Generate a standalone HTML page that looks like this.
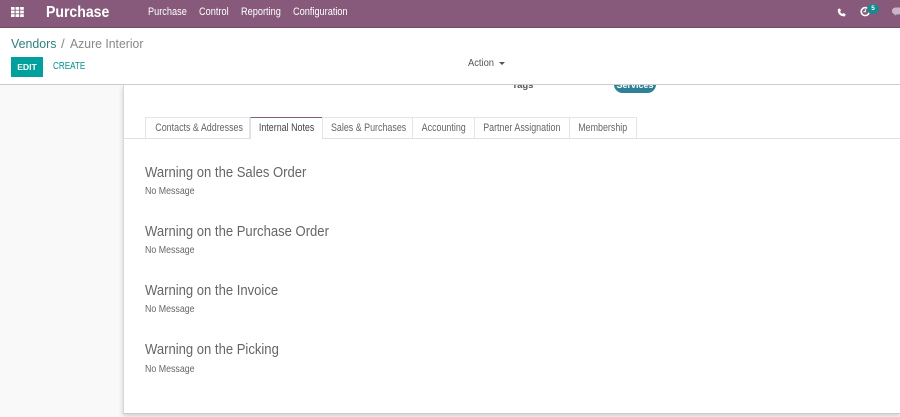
<!DOCTYPE html>
<html><head><meta charset="utf-8">
<style>
html,body{margin:0;padding:0;width:900px;height:417px;overflow:hidden;background:#f9f9f9;font-family:"Liberation Sans",sans-serif;color:#4c4c4c}
.a{position:absolute;white-space:nowrap;transform-origin:left center}
#nav{left:0;top:0;width:900px;height:27px;background:#875a7b;border-bottom:1px solid #6f4a66}
.m{top:5px;font-size:11px;line-height:14px;color:#fff;transform:scaleX(.835)}
#cp{left:0;top:28px;width:900px;height:56px;background:#fff;border-bottom:1px solid #ccc;z-index:3}
#sheet{left:123px;top:85px;width:777px;height:328px;background:#fff;border-left:1px solid #d8d8d8;border-bottom:1px solid #ccc;box-shadow:0 2px 5px rgba(0,0,0,.18)}
.tab{top:117px;height:20px;line-height:21px;background:#fff;border:1px solid #e2e5e8;border-bottom:none;font-size:10.8px;color:#666;text-align:center}
.tab span{display:inline-block;transform:scaleX(.825)}
.h{left:145px;font-size:14.6px;line-height:18px;color:#666;transform:scaleX(.895)}
.p{left:145px;font-size:10.4px;line-height:12px;color:#666;transform:scaleX(.85)}
</style></head><body>
<div id="nav" class="a"></div>
<svg class="a" style="left:11px;top:7px" width="13" height="10" viewBox="0 0 13 10" fill="#fff">
<rect x="0" y="0" width="3.6" height="2.8"/><rect x="4.6" y="0" width="3.6" height="2.8"/><rect x="9.2" y="0" width="3.6" height="2.8"/>
<rect x="0" y="3.6" width="3.6" height="2.8"/><rect x="4.6" y="3.6" width="3.6" height="2.8"/><rect x="9.2" y="3.6" width="3.6" height="2.8"/>
<rect x="0" y="7.2" width="3.6" height="2.8"/><rect x="4.6" y="7.2" width="3.6" height="2.8"/><rect x="9.2" y="7.2" width="3.6" height="2.8"/>
</svg>
<div class="a" style="left:46px;top:3px;font-size:15.8px;line-height:19px;font-weight:bold;color:#fff;transform:scaleX(.89)">Purchase</div>
<div class="a m" style="left:148px">Purchase</div>
<div class="a m" style="left:199px">Control</div>
<div class="a m" style="left:241px">Reporting</div>
<div class="a m" style="left:293px">Configuration</div>
<svg class="a" style="left:837px;top:7.5px" width="9" height="9" viewBox="0 0 9 9"><path d="M1 1 L3 .5 L4 2.8 L3 3.8 Q3.8 5.3 5.3 6 L6.3 5 L8.6 6.2 L8 8.2 Q4.5 8.8 2.2 6.3 Q.3 4 1 1Z" fill="#fff"/></svg>
<svg class="a" style="left:860px;top:6px" width="11" height="11" viewBox="0 0 11 11"><circle cx="5.2" cy="5.6" r="4" fill="none" stroke="#fff" stroke-width="1.6"/><path d="M5.4 3.2V5.8H3.4" fill="none" stroke="#fff" stroke-width="1"/></svg>
<div class="a" style="left:867px;top:4px;width:12px;height:10px;border-radius:5px;background:#178a8c;color:#fff;font-size:6.5px;line-height:10px;text-align:center;font-weight:bold">5</div>
<svg class="a" style="left:892px;top:7px" width="8" height="9" viewBox="0 0 8 9"><path d="M4 0.5C1.5.5 0 2 0 4s1.5 3.2 3 3.4L2.5 8.8 5 7.4H8V.5Z" fill="#c9b5c5"/></svg>

<div id="cp" class="a"></div>
<div class="a" style="left:11px;top:35px;font-size:13.3px;line-height:17px;z-index:4;color:#2f7f80;transform:scaleX(.93)">Vendors</div>
<div class="a" style="left:61px;top:35px;font-size:13.3px;line-height:17px;z-index:4;color:#888">/</div>
<div class="a" style="left:70px;top:35px;font-size:13.3px;line-height:17px;z-index:4;color:#888;transform:scaleX(.92)">Azure Interior</div>
<div class="a" style="left:11px;top:57px;width:32px;height:20px;background:#00a09d;color:#fff;font-size:8.6px;font-weight:bold;line-height:20px;text-align:center;z-index:4">EDIT</div>
<div class="a" style="left:53px;top:60px;font-size:10px;line-height:13px;color:#00918e;z-index:4;transform:scaleX(.81)">CREATE</div>
<div class="a" style="left:468px;top:57px;font-size:10.4px;line-height:14px;color:#555;z-index:4;transform:scaleX(.9)">Action</div>
<div class="a" style="left:499px;top:62px;width:0;height:0;border-left:3px solid transparent;border-right:3px solid transparent;border-top:3px solid #555;z-index:4"></div>

<div id="sheet" class="a"></div>
<div class="a" style="left:512px;top:80px;font-size:9.5px;line-height:12px;font-weight:bold;color:#555;z-index:1">Tags</div>
<div class="a" style="left:614px;top:76px;width:42px;height:17px;border-radius:9px;background:#2e8196;color:#fff;font-size:9px;font-weight:bold;line-height:19px;text-align:center;z-index:1">Services</div>

<div class="a" style="left:124px;top:138px;width:776px;height:1px;background:#dee2e6"></div>
<div class="a tab" style="left:145px;width:103px"><span>Contacts &amp; Addresses</span></div>
<div class="a tab" style="left:250px;width:71px;height:21px;border-color:#dee2e6;border-top-color:#875a7b;color:#444"><span>Internal Notes</span></div>
<div class="a tab" style="left:322px;width:89px"><span>Sales &amp; Purchases</span></div>
<div class="a tab" style="left:412px;width:61px"><span>Accounting</span></div>
<div class="a tab" style="left:474px;width:94px"><span>Partner Assignation</span></div>
<div class="a tab" style="left:569px;width:66px"><span>Membership</span></div>

<div class="a h" style="top:164px">Warning on the Sales Order</div>
<div class="a p" style="top:186px">No Message</div>
<div class="a h" style="top:223px">Warning on the Purchase Order</div>
<div class="a p" style="top:245px">No Message</div>
<div class="a h" style="top:282px">Warning on the Invoice</div>
<div class="a p" style="top:304px">No Message</div>
<div class="a h" style="top:341px">Warning on the Picking</div>
<div class="a p" style="top:364px">No Message</div>
</body></html>
